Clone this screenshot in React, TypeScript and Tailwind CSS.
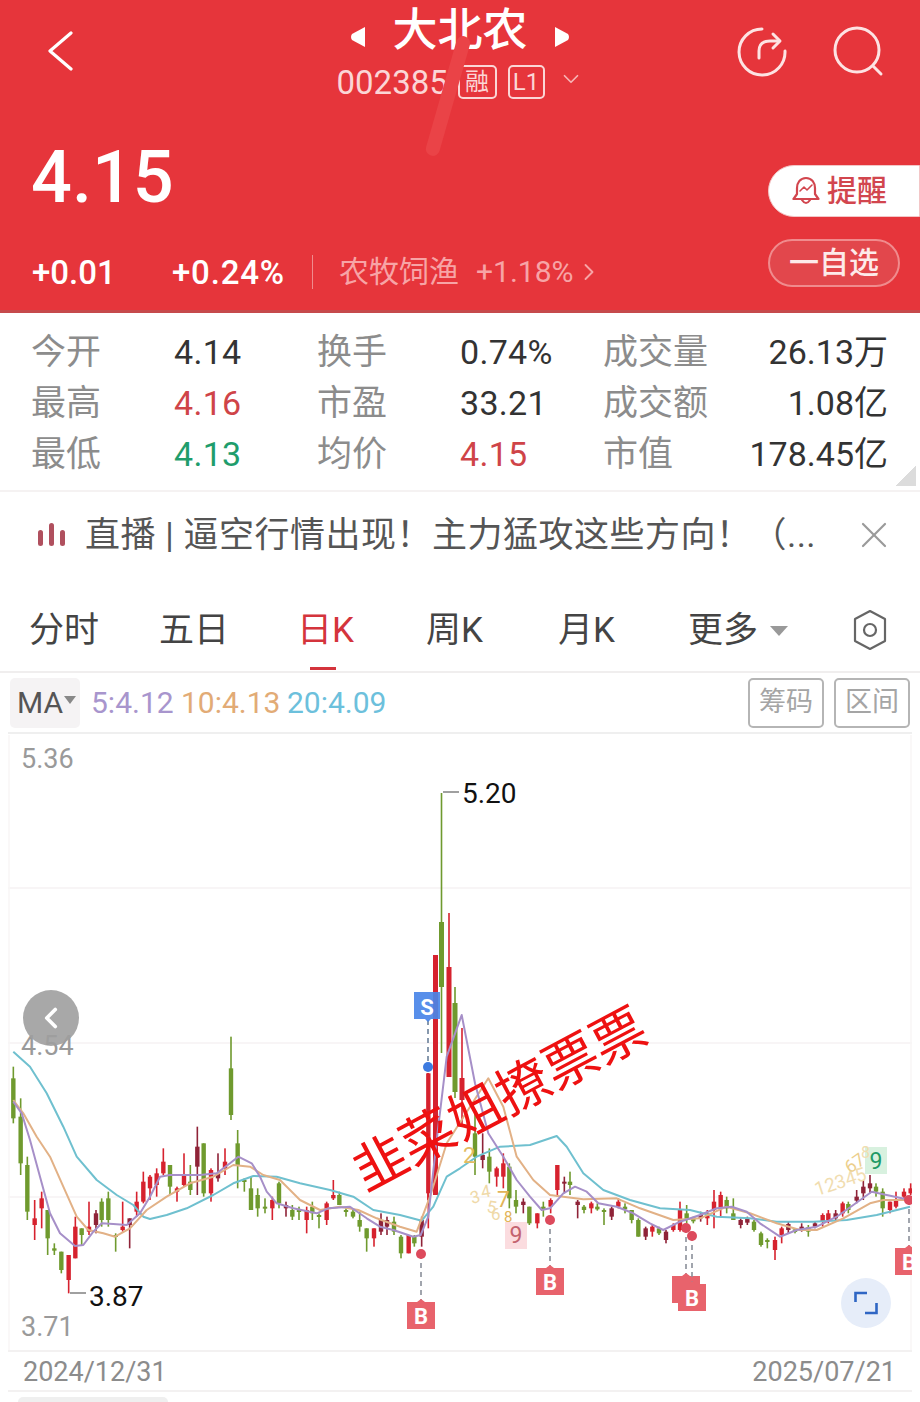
import { ChevronLeft, ChevronRight, ChevronDown, X } from 'lucide-react';

type Candle = [number, number, number, number, number, 'g' | 'r' | 'd'];

const candleColor = { g: '#6f9a2e', r: '#d6222e', d: '#8f2338' };

// numbers read off the 3x crops: x, wick top, wick bottom, body top, body bottom
const leftCandles: Candle[] = [
  [40, 200, 370, 235, 355, 'g'], [62, 295, 525, 350, 490, 'g'], [82, 470, 660, 495, 635, 'g'], [104, 600, 720, 655, 675, 'r'],
  [125, 575, 685, 595, 625, 'r'], [143, 630, 765, 630, 715, 'g'], [163, 730, 765, 745, 752, 'g'], [184, 755, 820, 755, 810, 'g'],
  [206, 765, 880, 765, 840, 'r'], [226, 650, 775, 680, 775, 'r'], [245, 685, 735, 685, 705, 'g'], [267, 605, 705, 680, 695, 'r'],
  [288, 630, 700, 640, 675, 'd'], [305, 595, 680, 605, 660, 'g'], [325, 575, 680, 595, 660, 'g'], [347, 700, 755, 705, 711, 'g'],
  [368, 605, 695, 680, 690, 'r'], [389, 655, 745, 655, 675, 'd'], [410, 575, 650, 605, 635, 'r'], [430, 515, 610, 545, 605, 'r'],
  [450, 525, 600, 530, 565, 'r'], [470, 505, 590, 520, 555, 'r'], [490, 445, 525, 485, 520, 'r'], [510, 495, 585, 495, 560, 'g'],
  [531, 560, 605, 565, 575, 'r'], [552, 460, 560, 525, 555, 'r'], [571, 495, 585, 545, 570, 'g'], [592, 380, 585, 440, 500, 'd'],
  [611, 430, 590, 430, 580, 'g'], [633, 505, 605, 510, 580, 'r'], [654, 460, 545, 520, 535, 'd'], [675, 445, 525, 485, 505, 'r'],
  [693, 110, 360, 205, 345, 'g'], [713, 390, 565, 430, 495, 'g'], [733, 535, 575, 540, 546, 'g'], [753, 530, 630, 565, 630, 'g'],
  [773, 565, 650, 585, 625, 'g'], [795, 595, 640, 620, 626, 'g'], [817, 590, 660, 600, 625, 'r'], [837, 545, 625, 550, 610, 'g'],
  [858, 605, 650, 615, 625, 'd'], [877, 615, 660, 630, 650, 'g'], [897, 620, 660, 630, 636, 'g'], [920, 620, 700, 630, 660, 'r'],
  [937, 605, 660, 620, 640, 'g'], [957, 640, 685, 645, 651, 'g'], [980, 605, 675, 610, 660, 'r'], [1000, 540, 600, 585, 595, 'r'],
  [1018, 575, 615, 585, 615, 'g'], [1038, 625, 650, 630, 636, 'g'], [1059, 630, 655, 635, 650, 'g'], [1079, 635, 695, 660, 680, 'g'],
  [1100, 685, 755, 685, 715, 'g'], [1122, 685, 740, 685, 715, 'r'], [1143, 640, 705, 660, 695, 'd'], [1161, 650, 705, 660, 680, 'd'],
  [1182, 650, 705, 665, 695, 'g'], [1203, 705, 775, 710, 760, 'g'], [1226, 705, 760, 705, 760, 'r'], [1243, 705, 740, 710, 730, 'g'],
  [1265, 650, 740, 660, 710, 'd'], [1285, 220, 685, 220, 580, 'r'],
];

const rightCandles: Candle[] = [
  [45, 330, 525, 400, 470, 'g'], [68, 400, 505, 465, 480, 'd'], [88, 445, 550, 470, 515, 'g'], [110, 500, 560, 505, 530, 'r'],
  [130, 460, 565, 490, 530, 'r'], [148, 490, 625, 500, 595, 'g'], [168, 570, 640, 600, 620, 'g'], [190, 595, 640, 605, 615, 'd'],
  [208, 620, 675, 620, 670, 'g'], [232, 640, 685, 640, 670, 'r'], [250, 605, 650, 620, 630, 'g'], [272, 595, 640, 600, 620, 'r'],
  [292, 495, 590, 495, 570, 'r'], [313, 530, 580, 545, 551, 'd'], [330, 515, 585, 545, 555, 'g'], [353, 600, 655, 605, 615, 'd'],
  [372, 615, 640, 620, 630, 'g'], [394, 605, 640, 610, 625, 'r'], [412, 610, 632, 620, 628, 'g'], [432, 625, 675, 630, 636, 'g'],
  [455, 620, 660, 625, 650, 'd'], [475, 595, 625, 605, 620, 'r'], [495, 610, 640, 620, 628, 'g'], [515, 630, 670, 630, 660, 'g'],
  [535, 655, 710, 660, 710, 'g'], [557, 680, 720, 685, 710, 'd'], [577, 675, 710, 680, 695, 'r'], [597, 680, 705, 685, 700, 'g'],
  [618, 690, 730, 695, 720, 'd'], [640, 670, 695, 675, 690, 'r'], [660, 605, 695, 630, 690, 'r'], [680, 615, 670, 640, 660, 'g'],
  [700, 650, 670, 652, 664, 'g'], [722, 635, 665, 645, 655, 'd'], [742, 630, 675, 640, 655, 'r'], [762, 570, 685, 605, 630, 'r'],
  [782, 575, 650, 585, 625, 'r'], [800, 590, 640, 600, 625, 'g'], [820, 595, 660, 640, 660, 'g'], [842, 655, 685, 660, 675, 'd'],
  [862, 650, 675, 655, 668, 'd'], [882, 660, 695, 665, 690, 'g'], [903, 695, 740, 700, 735, 'g'], [922, 715, 745, 720, 726, 'g'],
  [945, 710, 780, 720, 750, 'r'], [965, 680, 730, 685, 705, 'r'], [985, 665, 700, 672, 690, 'd'], [1005, 685, 700, 688, 696, 'g'],
  [1025, 670, 695, 680, 690, 'd'], [1045, 675, 710, 682, 695, 'g'], [1065, 665, 685, 670, 680, 'd'], [1088, 640, 680, 645, 665, 'r'],
  [1105, 630, 670, 640, 660, 'r'], [1127, 630, 665, 640, 655, 'd'], [1148, 605, 650, 610, 640, 'r'], [1165, 605, 640, 612, 630, 'g'],
  [1190, 570, 610, 590, 602, 'd'], [1210, 540, 600, 560, 580, 'd'], [1230, 525, 580, 550, 565, 'd'], [1248, 550, 590, 560, 575, 'g'],
  [1268, 565, 650, 575, 625, 'g'], [1290, 605, 640, 605, 630, 'r'], [1308, 575, 625, 600, 620, 'r'], [1332, 565, 600, 575, 590, 'r'],
  [1352, 550, 585, 565, 580, 'r'],
];

// the big spike, already in page pixels
const spikeCandles: Candle[] = [
  [428, 1073, 1200, 1073, 1200, 'r'], [441.5, 793, 1053, 922, 987, 'g'], [449, 913, 1077, 967, 1077, 'r'],
  [455, 987, 1098, 1003, 1092, 'g'], [462, 1028, 1125, 1078, 1100, 'r'],
];

const left = (pts: number[][]) => pts.map(([x, y]) => `${(x / 3).toFixed(1)},${(1000 + y / 3).toFixed(1)}`);
const right = (pts: number[][]) => pts.map(([x, y]) => `${(460 + x / 3).toFixed(1)},${(1000 + y / 3).toFixed(1)}`);

const ma5 = [
  ...left([[40, 305], [65, 340], [90, 420], [120, 530], [150, 640], [180, 700], [225, 738], [250, 735], [280, 695], [305, 670], [340, 672], [380, 675], [420, 640], [450, 590], [480, 530], [510, 525], [550, 525], [600, 525], [650, 520], [690, 490], [715, 470], [755, 490], [780, 530], [800, 575], [830, 610], [880, 625], [950, 640], [985, 625], [1050, 620], [1100, 655], [1140, 680], [1180, 690], [1240, 710], [1262, 705], [1285, 650], [1310, 420], [1340, 170]]),
  ...right([[5, 45], [45, 250], [85, 400], [130, 470], [170, 540], [210, 590], [245, 630], [270, 625], [310, 580], [345, 560], [380, 575], [415, 610], [470, 620], [520, 640], [570, 670], [610, 690], [660, 665], [720, 645], [770, 625], [815, 620], [860, 635], [900, 670], [960, 710], [1010, 690], [1070, 680], [1130, 650], [1180, 615], [1235, 575], [1280, 585], [1350, 600]]),
].join(' ');

const ma10 = [
  ...left([[40, 300], [70, 340], [110, 410], [150, 470], [190, 560], [230, 650], [265, 690], [310, 700], [345, 710], [390, 685], [440, 630], [500, 590], [570, 550], [640, 530], [700, 495], [750, 500], [790, 525], [840, 540], [900, 600], [960, 630], [1020, 620], [1075, 630], [1130, 655], [1200, 680], [1250, 695], [1290, 590], [1340, 430]]),
  ...right([[85, 235], [130, 320], [170, 470], [220, 540], [270, 585], [310, 590], [370, 598], [470, 595], [540, 625], [640, 660], [720, 655], [800, 620], [870, 640], [950, 670], [1020, 690], [1070, 690], [1150, 655], [1230, 610], [1270, 600], [1350, 600]]),
].join(' ');

const ma20 = [
  ...left([[40, 155], [90, 200], [140, 280], [190, 380], [230, 470], [290, 540], [350, 585], [400, 615], [430, 650], [450, 657], [500, 645], [560, 625], [640, 585], [700, 550], [760, 528], [830, 530], [900, 550], [990, 570], [1060, 590], [1120, 630], [1200, 645], [1265, 662], [1300, 620], [1340, 530]]),
  ...right([[0, 505], [50, 470], [120, 440], [210, 435], [290, 408], [320, 440], [370, 520], [430, 570], [510, 600], [600, 625], [690, 630], [770, 650], [870, 655], [950, 665], [1060, 665], [1160, 660], [1250, 645], [1350, 620]]),
].join(' ');

function CandleMark({ x, c, w }: { x: number; c: Candle; w: number }) {
  return (
    <g fill={candleColor[c[5]]}>
      <rect x={x - 0.8} y={c[1]} width={1.6} height={c[2] - c[1]} />
      <rect x={x - w / 2} y={c[3]} width={w} height={Math.max(c[4] - c[3], 2)} />
    </g>
  );
}

function Signal({ x, y, dot, label }: { x: number; y: number; dot: number; label: string }) {
  return (
    <g>
      <line x1={x} x2={x} y1={dot} y2={y} stroke="#8a8f99" strokeWidth="1.6" strokeDasharray="5 4" />
      <circle cx={x} cy={dot} r={5} fill="#dd4a5c" />
      <path d={`M${x - 14} ${y + 2} h10 l4 -3 l4 3 h10 v27 h-28 z`} fill="#e8636c" />
      <text x={x} y={y + 24} textAnchor="middle" fontSize="22" fontWeight="700" fill="#fff">{label}</text>
    </g>
  );
}

function ChartDrawing() {
  return (
    <svg viewBox="8 735 904 617" className="absolute inset-0 h-[617px] w-[904px]">
      {[888, 1043, 1197].map((y) => (
        <line key={y} x1="8" x2="912" y1={y} y2={y} stroke="#f6f2f3" strokeWidth="1.5" />
      ))}
      <line x1="9" x2="9" y1="735" y2="1352" stroke="#f8f6f6" strokeWidth="1.5" />
      <line x1="911" x2="911" y1="735" y2="1352" stroke="#f8f6f6" strokeWidth="1.5" />
      {leftCandles.map((c) => (
        <CandleMark key={`l${c[0]}`} x={c[0] / 3} w={4.4} c={[c[0], 1000 + c[1] / 3, 1000 + c[2] / 3, 1000 + c[3] / 3, 1000 + c[4] / 3, c[5]]} />
      ))}
      {spikeCandles.map((c) => (
        <CandleMark key={`s${c[0]}`} x={c[0]} w={c[0] === 428 ? 1 : 5} c={c} />
      ))}
      <rect x="433" y="955" width="5" height="240" fill="#d6222e" />
      {rightCandles.map((c) => (
        <CandleMark key={`r${c[0]}`} x={460 + c[0] / 3} w={4.4} c={[c[0], 1000 + c[1] / 3, 1000 + c[2] / 3, 1000 + c[3] / 3, 1000 + c[4] / 3, c[5]]} />
      ))}
      <polyline points={ma20} fill="none" stroke="#6fc0cf" strokeWidth="2" strokeLinejoin="round" />
      <polyline points={ma10} fill="none" stroke="#e2b186" strokeWidth="2" strokeLinejoin="round" />
      <polyline points={ma5} fill="none" stroke="#a68fc8" strokeWidth="2" strokeLinejoin="round" />

      <line x1="443" x2="459" y1="792" y2="792" stroke="#777" strokeWidth="1.4" />
      <text x="462" y="803" fontSize="28" fill="#111">5.20</text>
      <line x1="70" x2="86" y1="1293" y2="1293" stroke="#777" strokeWidth="1.4" />
      <text x="89" y="1306" fontSize="28" fill="#111">3.87</text>

      <line x1="428" x2="428" y1="1020" y2="1067" stroke="#6a7f99" strokeWidth="1.6" strokeDasharray="5 4" />
      <circle cx="428" cy="1067" r="5" fill="#3d7be0" />
      <path d="M414 992 h26 v27 h-9 l-3 3 l-3 -3 h-11 z" fill="#4a86e8" fillOpacity="0.92" />
      <text x="427" y="1015" textAnchor="middle" fontSize="22" fontWeight="700" fill="#fff">S</text>

      <Signal x={421} y={1300} dot={1254} label="B" />
      <Signal x={550} y={1266} dot={1220} label="B" />
      <Signal x={686} y={1274} dot={1228} label="" />
      <Signal x={692} y={1282} dot={1236} label="B" />
      <Signal x={909} y={1246} dot={1200} label="B" />

      <rect x="505" y="1222" width="22" height="27" fill="#fbdcdf" />
      <text x="516" y="1243" textAnchor="middle" fontSize="23" fill="#c4636e">9</text>
      <rect x="865" y="1147" width="22" height="27" fill="#d8f1df" />
      <text x="876" y="1169" textAnchor="middle" fontSize="23" fill="#1f9a66">9</text>

      <text x="463" y="1163" fontSize="22" fill="#e2bc62">2</text>
      <g fontSize="17" fill="#efd9a8">
        <text x="472" y="1204" transform="rotate(-15 472 1204)">3</text>
        <text x="482" y="1198" transform="rotate(-10 482 1198)">4</text>
        <text x="486" y="1212" transform="rotate(10 486 1212)">5</text>
        <text x="491" y="1220">6</text>
      </g>
      <text x="497" y="1207" fontSize="22" fill="#e2b458">7</text>
      <text x="504" y="1222" fontSize="15" fill="#e2b458">8</text>
      <text x="817" y="1196" fontSize="19" fill="#f1ddb0" transform="rotate(-18 817 1196)">12345</text>
      <text x="850" y="1174" fontSize="18" fill="#eccf8d" transform="rotate(-35 850 1174)">67</text>
      <text x="861" y="1158" fontSize="16" fill="#f1ddb0">8</text>
    </svg>
  );
}

const stats = [
  [
    ['今开', '4.14', 'text-[#333]'],
    ['最高', '4.16', 'text-[#cf4448]'],
    ['最低', '4.13', 'text-[#1f9d6c]'],
  ],
  [
    ['换手', '0.74%', 'text-[#333]'],
    ['市盈', '33.21', 'text-[#333]'],
    ['均价', '4.15', 'text-[#cf4448]'],
  ],
];

const ranges = [
  ['成交量', '26.13万'],
  ['成交额', '1.08亿'],
  ['市值', '178.45亿'],
];

const tabs = [
  { label: '分时', cls: 'w-[130px]' },
  { label: '五日', cls: 'w-[138px]' },
  { label: '日K', cls: 'w-[129px] text-[#d4343c]' },
  { label: '周K', cls: 'w-[132px]' },
  { label: '月K', cls: 'w-[130px]' },
];

export default function App() {
  return (
    <div className="relative h-[1402px] w-[920px] overflow-hidden bg-white font-['Roboto','Noto_Sans_CJK_SC',sans-serif]">
      {/* header */}
      <header className="relative h-[313px] overflow-hidden border-b-[3px] border-[#c64a4c] bg-[#e6353b] text-white">
        <div className="grid h-[138px] grid-cols-[1fr_auto_1fr]">
          <div className="pl-[47px] pt-[31px]">
            <svg width="27" height="40" viewBox="0 0 27 40" fill="none" stroke="#fff" strokeWidth="3.2" strokeLinecap="round" strokeLinejoin="round">
              <path d="M24 2 L3 20 L24 38" />
            </svg>
          </div>
          <div className="flex flex-col items-center">
            <div className="flex h-[60px] items-center gap-[26px]">
              <svg width="16" height="22" viewBox="0 0 16 22" fill="#fff" className="translate-y-[7px]"><path d="M15 1 L2 8 Q0 11 2 14 L15 21 Z" /></svg>
              <span className="text-[45px] leading-none font-medium">大北农</span>
              <svg width="16" height="22" viewBox="0 0 16 22" fill="#fff" className="translate-y-[7px]"><path d="M1 1 L14 8 Q16 11 14 14 L1 21 Z" /></svg>
            </div>
            <div className="flex h-[44px] items-center text-[#fbd6d6]">
              <span className="w-[121px] text-[33px] leading-none">002385</span>
              <span className="flex h-[34px] w-[39px] items-center justify-center rounded-[5px] border-2 border-[#fbd6d6] text-[24px] leading-none">融</span>
              <span className="ml-[11px] flex h-[34px] w-[37px] items-center justify-center rounded-[5px] border-2 border-[#fbd6d6] text-[24px] leading-none">L1</span>
              <ChevronDown size={26} strokeWidth={1.6} className="ml-[13px] -translate-y-[3px] text-[#f7b4b5]" />
            </div>
          </div>
          <div className="flex justify-end gap-[44px] pr-[36px] pt-[26px] text-[#fde3e3]">
            <svg width="52" height="52" viewBox="0 0 52 52" fill="none" stroke="currentColor" strokeWidth="3" strokeLinecap="round" strokeLinejoin="round">
              <path d="M26 3 A23 23 0 1 0 49 25" />
              <path d="M23 32 V25 Q23 15 34 15 H43" />
              <path d="M37 8 L44 15 L37 22" />
            </svg>
            <svg width="52" height="52" viewBox="0 0 52 52" fill="none" stroke="currentColor" strokeWidth="3" strokeLinecap="round">
              <circle cx="25" cy="24" r="22" />
              <path d="M41 40 L49 48" />
            </svg>
          </div>
        </div>

        <div className="flex h-[92px] items-start justify-between">
          <span className="pl-[31px] text-[72px] leading-[80px] font-medium">4.15</span>
          <div className="mt-[27px] flex h-[52px] w-[152px] items-center rounded-l-[26px] border border-[#f3c6c7] bg-white pl-[23px] text-[#d2464e]">
            <svg width="28" height="30" viewBox="0 0 28 30" fill="none" stroke="currentColor" strokeWidth="2.2" strokeLinejoin="round" strokeLinecap="round">
              <path d="M14 2 C8 2 5 7 5 12 V18 L1.5 23 H26.5 L23 18 V12 C23 7 20 2 14 2 Z" />
              <path d="M10 24 Q14 30 18 24" />
              <path d="M8 15 L12 11 L15 14 L20 9" strokeWidth="1.6" />
            </svg>
            <span className="ml-[7px] text-[30px] leading-none font-medium">提醒</span>
          </div>
        </div>

        <div className="flex h-[80px] items-start justify-between pr-[20px]">
          <div className="mt-[11px] flex h-[62px] items-center pl-[32px]">
            <span className="w-[140px] text-[33px] leading-none font-medium">+0.01</span>
            <span className="w-[140px] text-[33px] leading-none font-medium tracking-[0.8px]">+0.24%</span>
            <span className="h-[34px] w-px bg-[#f08b8d]" />
            <span className="ml-[26px] text-[30px] leading-none text-[#f7a4a6]">农牧饲渔</span>
            <span className="ml-[17px] text-[30px] leading-none text-[#f7a4a6]">+1.18%</span>
            <ChevronRight size={28} strokeWidth={1.6} className="ml-[1px] text-[#f7a4a6]" />
          </div>
          <div className="mt-[9px] flex h-[48px] w-[132px] items-center justify-center rounded-full border-2 border-[#f08b8d] bg-[#e2474c] text-[30px] leading-none font-medium text-[#fdeaea]">
            一自选
          </div>
        </div>

        <div className="absolute top-[34px] left-[441px] h-[124px] w-[14px] rotate-[16deg] rounded-full bg-[#ea4347]" />
      </header>

      {/* quote stats */}
      <section className="relative flex h-[179px] border-b-2 border-[#f5f2f2] pl-[31px] pr-[32px] pt-[14px]">
        {stats.map((col, i) => (
          <div key={i} className="w-[286px]">
            {col.map(([label, value, color]) => (
              <div key={label} className="flex h-[51px] items-center">
                <span className="w-[143px] text-[35px] leading-none text-[#8c8c8c]">{label}</span>
                <span className={`pb-[2px] text-[34px] leading-none tracking-[0.3px] ${color}`}>{value}</span>
              </div>
            ))}
          </div>
        ))}
        <div className="flex-1">
          {ranges.map(([label, value]) => (
            <div key={label} className="flex h-[51px] items-center justify-between">
              <span className="text-[35px] leading-none text-[#8c8c8c]">{label}</span>
              <span className="pb-[2px] text-[34px] leading-none text-[#333]">{value}</span>
            </div>
          ))}
        </div>
        <span className="absolute right-[4px] bottom-[4px] h-[20px] w-[20px] bg-[linear-gradient(135deg,transparent_50%,#dcdcdc_50%)]" />
      </section>

      {/* live news strip */}
      <section className="flex h-[86px] items-center pl-[38px] pr-[24px] text-[#555]">
        <svg width="28" height="24" viewBox="0 0 28 24" fill="#b0505e">
          <rect x="0" y="7" width="5" height="16" rx="2.5" />
          <rect x="11" y="0" width="5" height="23" rx="2.5" />
          <rect x="22" y="7" width="5" height="16" rx="2.5" />
        </svg>
        <span className="ml-[19px] flex-1 text-[35px] leading-none tracking-[0.5px] whitespace-nowrap">直播 | 逼空行情出现！主力猛攻这些方向！（...</span>
        <X size={44} strokeWidth={1.2} className="text-[#9a9a9a]" />
      </section>

      {/* period tabs */}
      <nav className="flex h-[95px] items-center border-b-2 border-[#f0eeee] pl-[29px] text-[35px] leading-none text-[#444]">
        {tabs.map((t) => (
          <span key={t.label} className={`relative pt-[12px] ${t.cls}`}>
            {t.label}
            {t.label === '日K' && <span className="absolute top-[66px] left-[13px] h-[3px] w-[26px] bg-[#d4343c]" />}
          </span>
        ))}
        <span className="pt-[12px]">更多</span>
        <svg width="18" height="12" viewBox="0 0 18 12" fill="#999" className="mt-[12px] ml-[12px]"><path d="M0 1 H18 L9 11 Z" /></svg>
        <svg width="36" height="42" viewBox="0 0 36 42" fill="none" stroke="#666" strokeWidth="2.2" className="mt-[10px] ml-[64px]">
          <path d="M18 2 L33 10 V32 L18 40 L3 32 V10 Z" strokeLinejoin="round" />
          <circle cx="18" cy="21" r="6" />
        </svg>
      </nav>

      {/* MA legend */}
      <section className="mx-[8px] flex h-[61px] items-center border-b-2 border-[#efefef] pr-[2px]">
        <div className="ml-[2px] flex h-[50px] w-[70px] items-center rounded-[5px] bg-[#f5f3f4] pl-[7px] text-[30px] leading-none text-[#555]">
          MA
          <svg width="12" height="8" viewBox="0 0 12 8" fill="#888" className="ml-[1px] -translate-y-[3px]"><path d="M0 0 H12 L6 8 Z" /></svg>
        </div>
        <div className="ml-[11px] flex flex-1 text-[30px] leading-none">
          <span className="w-[90px] text-[#a895cd]">5:4.12</span>
          <span className="w-[106px] text-[#e2ab76]">10:4.13</span>
          <span className="text-[#6cc0dc]">20:4.09</span>
        </div>
        <span className="flex h-[50px] w-[76px] items-center justify-center rounded-[5px] border-2 border-[#b5b5b5] text-[27px] leading-none text-[#a5a5a5]">筹码</span>
        <span className="ml-[10px] flex h-[50px] w-[76px] items-center justify-center rounded-[5px] border-2 border-[#b5b5b5] text-[27px] leading-none text-[#a5a5a5]">区间</span>
      </section>

      {/* kline */}
      <section className="relative mx-[8px] mt-[1px] h-[617px] overflow-hidden border-b-2 border-[#f3f1f1]">
        <ChartDrawing />
        <span className="absolute top-[11px] left-[13px] text-[27px] leading-none text-[#9a9a9a]">5.36</span>
        <span className="absolute top-[298px] left-[13px] text-[27px] leading-none text-[#9a9a9a]">4.54</span>
        <span className="absolute top-[579px] left-[13px] text-[27px] leading-none text-[#9a9a9a]">3.71</span>
        <button className="absolute top-[255px] left-[15px] flex h-[56px] w-[56px] items-center justify-center rounded-full bg-[#9f9f9f]/90 text-white">
          <ChevronLeft size={34} strokeWidth={2.6} />
        </button>
        <span className="absolute top-[338px] left-[330px] origin-center -rotate-[28deg] text-[54px] leading-none font-normal whitespace-nowrap text-[#ee1111]">韭菜姐撩票票</span>
        <button className="absolute top-[543px] left-[833px] flex h-[50px] w-[50px] items-center justify-center rounded-full bg-[#e6edf9]">
          <svg width="24" height="24" viewBox="0 0 24 24" fill="none" stroke="#2f66c4" strokeWidth="2.6">
            <path d="M1.5 11 V2 H13" />
            <path d="M22.5 12 V22 H11" />
          </svg>
        </button>
      </section>

      {/* date axis */}
      <footer className="mx-[8px] flex h-[40px] items-center justify-between border-b-2 border-[#f3f1f1] pl-[15px] pr-[16px] pt-[3px] text-[27px] leading-none text-[#8c8c8c]">
        <span>2024/12/31</span>
        <span>2025/07/21</span>
      </footer>
      <div className="mt-[5px] ml-[18px] h-[10px] w-[150px] rounded-full bg-[#efefef]" />
    </div>
  );
}
